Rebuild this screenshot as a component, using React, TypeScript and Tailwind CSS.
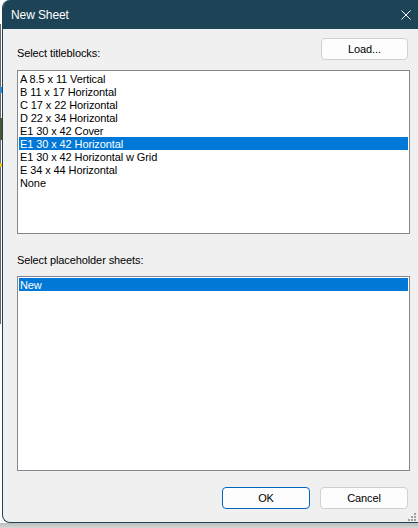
import React from "react";

const titleblocks = [
  "A 8.5 x 11 Vertical",
  "B 11 x 17 Horizontal",
  "C 17 x 22 Horizontal",
  "D 22 x 34 Horizontal",
  "E1 30 x 42 Cover",
  "E1 30 x 42 Horizontal",
  "E1 30 x 42 Horizontal w Grid",
  "E 34 x 44 Horizontal",
  "None",
];

function ListBox({ items, selected, height }: { items: string[]; selected: number; height: string }) {
  return (
    <div className={`w-[393px] ${height} border border-[#828790] bg-white p-px`}>
      {items.map((it, i) => (
        <div
          key={it}
          className={`h-[13px] pt-px leading-[12px] pl-px whitespace-nowrap ${
            i === selected ? "bg-[#0078d7] text-white" : "text-black"
          }`}
        >
          {it}
        </div>
      ))}
    </div>
  );
}

export default function App() {
  return (
    <div className="relative w-[418px] h-[528px] overflow-hidden bg-white font-['Liberation_Sans',Arial,sans-serif] text-[11px] tracking-[-0.1px]">
      {/* left background strip details */}
      <div className="absolute left-0 top-[24px] w-px h-[300px] bg-[#6b6b6b]" />
      <div className="absolute left-0 top-[87px] w-[2px] h-[6px] bg-[#2a8ae0]" />
      <div className="absolute left-0 top-[118px] w-[2px] h-[22px] bg-[#4a5530]" />
      <div className="absolute left-0 top-[163px] w-[2px] h-[4px] bg-[#e8c820]" />

      <div className="flex flex-col w-[420px] h-[523px] ml-[2px] rounded-tl-[8px] rounded-bl-[8px] border-l border-b border-[#1d4356] bg-[#f0f0f0] overflow-hidden">
        {/* title bar */}
        <div className="flex h-[29px] shrink-0 items-center justify-between bg-[#1d4356] pl-[8px] pr-[11px] text-white">
          <span className="text-[12px] tracking-[-0.1px]">New Sheet</span>
          <svg width="10" height="10" viewBox="0 0 10 10">
            <path d="M0.5 0.5 L9.5 9.5 M9.5 0.5 L0.5 9.5" stroke="white" strokeWidth="1" fill="none" />
          </svg>
        </div>

        {/* body */}
        <div className="flex flex-1 flex-col pl-[14px] text-black">
          <div className="mt-[9px] flex w-[393px] items-end justify-between">
            <span className="leading-[13px]">Select titleblocks:</span>
            <button className="mr-[2px] h-[22px] w-[87px] rounded-[4px] border border-[#d0d0d0] bg-[#fdfdfd] leading-[20px]">
              Load...
            </button>
          </div>
          <div className="mt-[10px]">
            <ListBox items={titleblocks} selected={5} height="h-[164px]" />
          </div>
          <div className="mt-[19px] leading-[15px]">Select placeholder sheets:</div>
          <div className="mt-[8px]">
            <ListBox items={["New"]} selected={0} height="h-[195px]" />
          </div>
          <div className="mt-[16px] flex w-[393px] justify-end gap-[10px] pr-[2px]">
            <button className="h-[22px] w-[88px] rounded-[4px] border border-[#0067c0] bg-[#fdfdfd] leading-[20px]">
              OK
            </button>
            <button className="h-[22px] w-[88px] rounded-[4px] border border-[#d0d0d0] bg-[#fdfdfd] leading-[20px]">
              Cancel
            </button>
          </div>
        </div>
      </div>
      <div className="h-[5px] bg-gradient-to-b from-[#bdbdbd] to-[#d6d6d6]" />

      {/* size grip */}
      <div className="absolute left-[414px] top-[513px] h-[2px] w-[2px] bg-[#a0a0a0]" />
      <div className="absolute left-[411px] top-[516px] h-[2px] w-[2px] bg-[#a0a0a0]" />
      <div className="absolute left-[414px] top-[516px] h-[2px] w-[2px] bg-[#a0a0a0]" />
      <div className="absolute left-[408px] top-[519px] h-[2px] w-[2px] bg-[#a0a0a0]" />
      <div className="absolute left-[411px] top-[519px] h-[2px] w-[2px] bg-[#a0a0a0]" />
      <div className="absolute left-[414px] top-[519px] h-[2px] w-[2px] bg-[#a0a0a0]" />
    </div>
  );
}
